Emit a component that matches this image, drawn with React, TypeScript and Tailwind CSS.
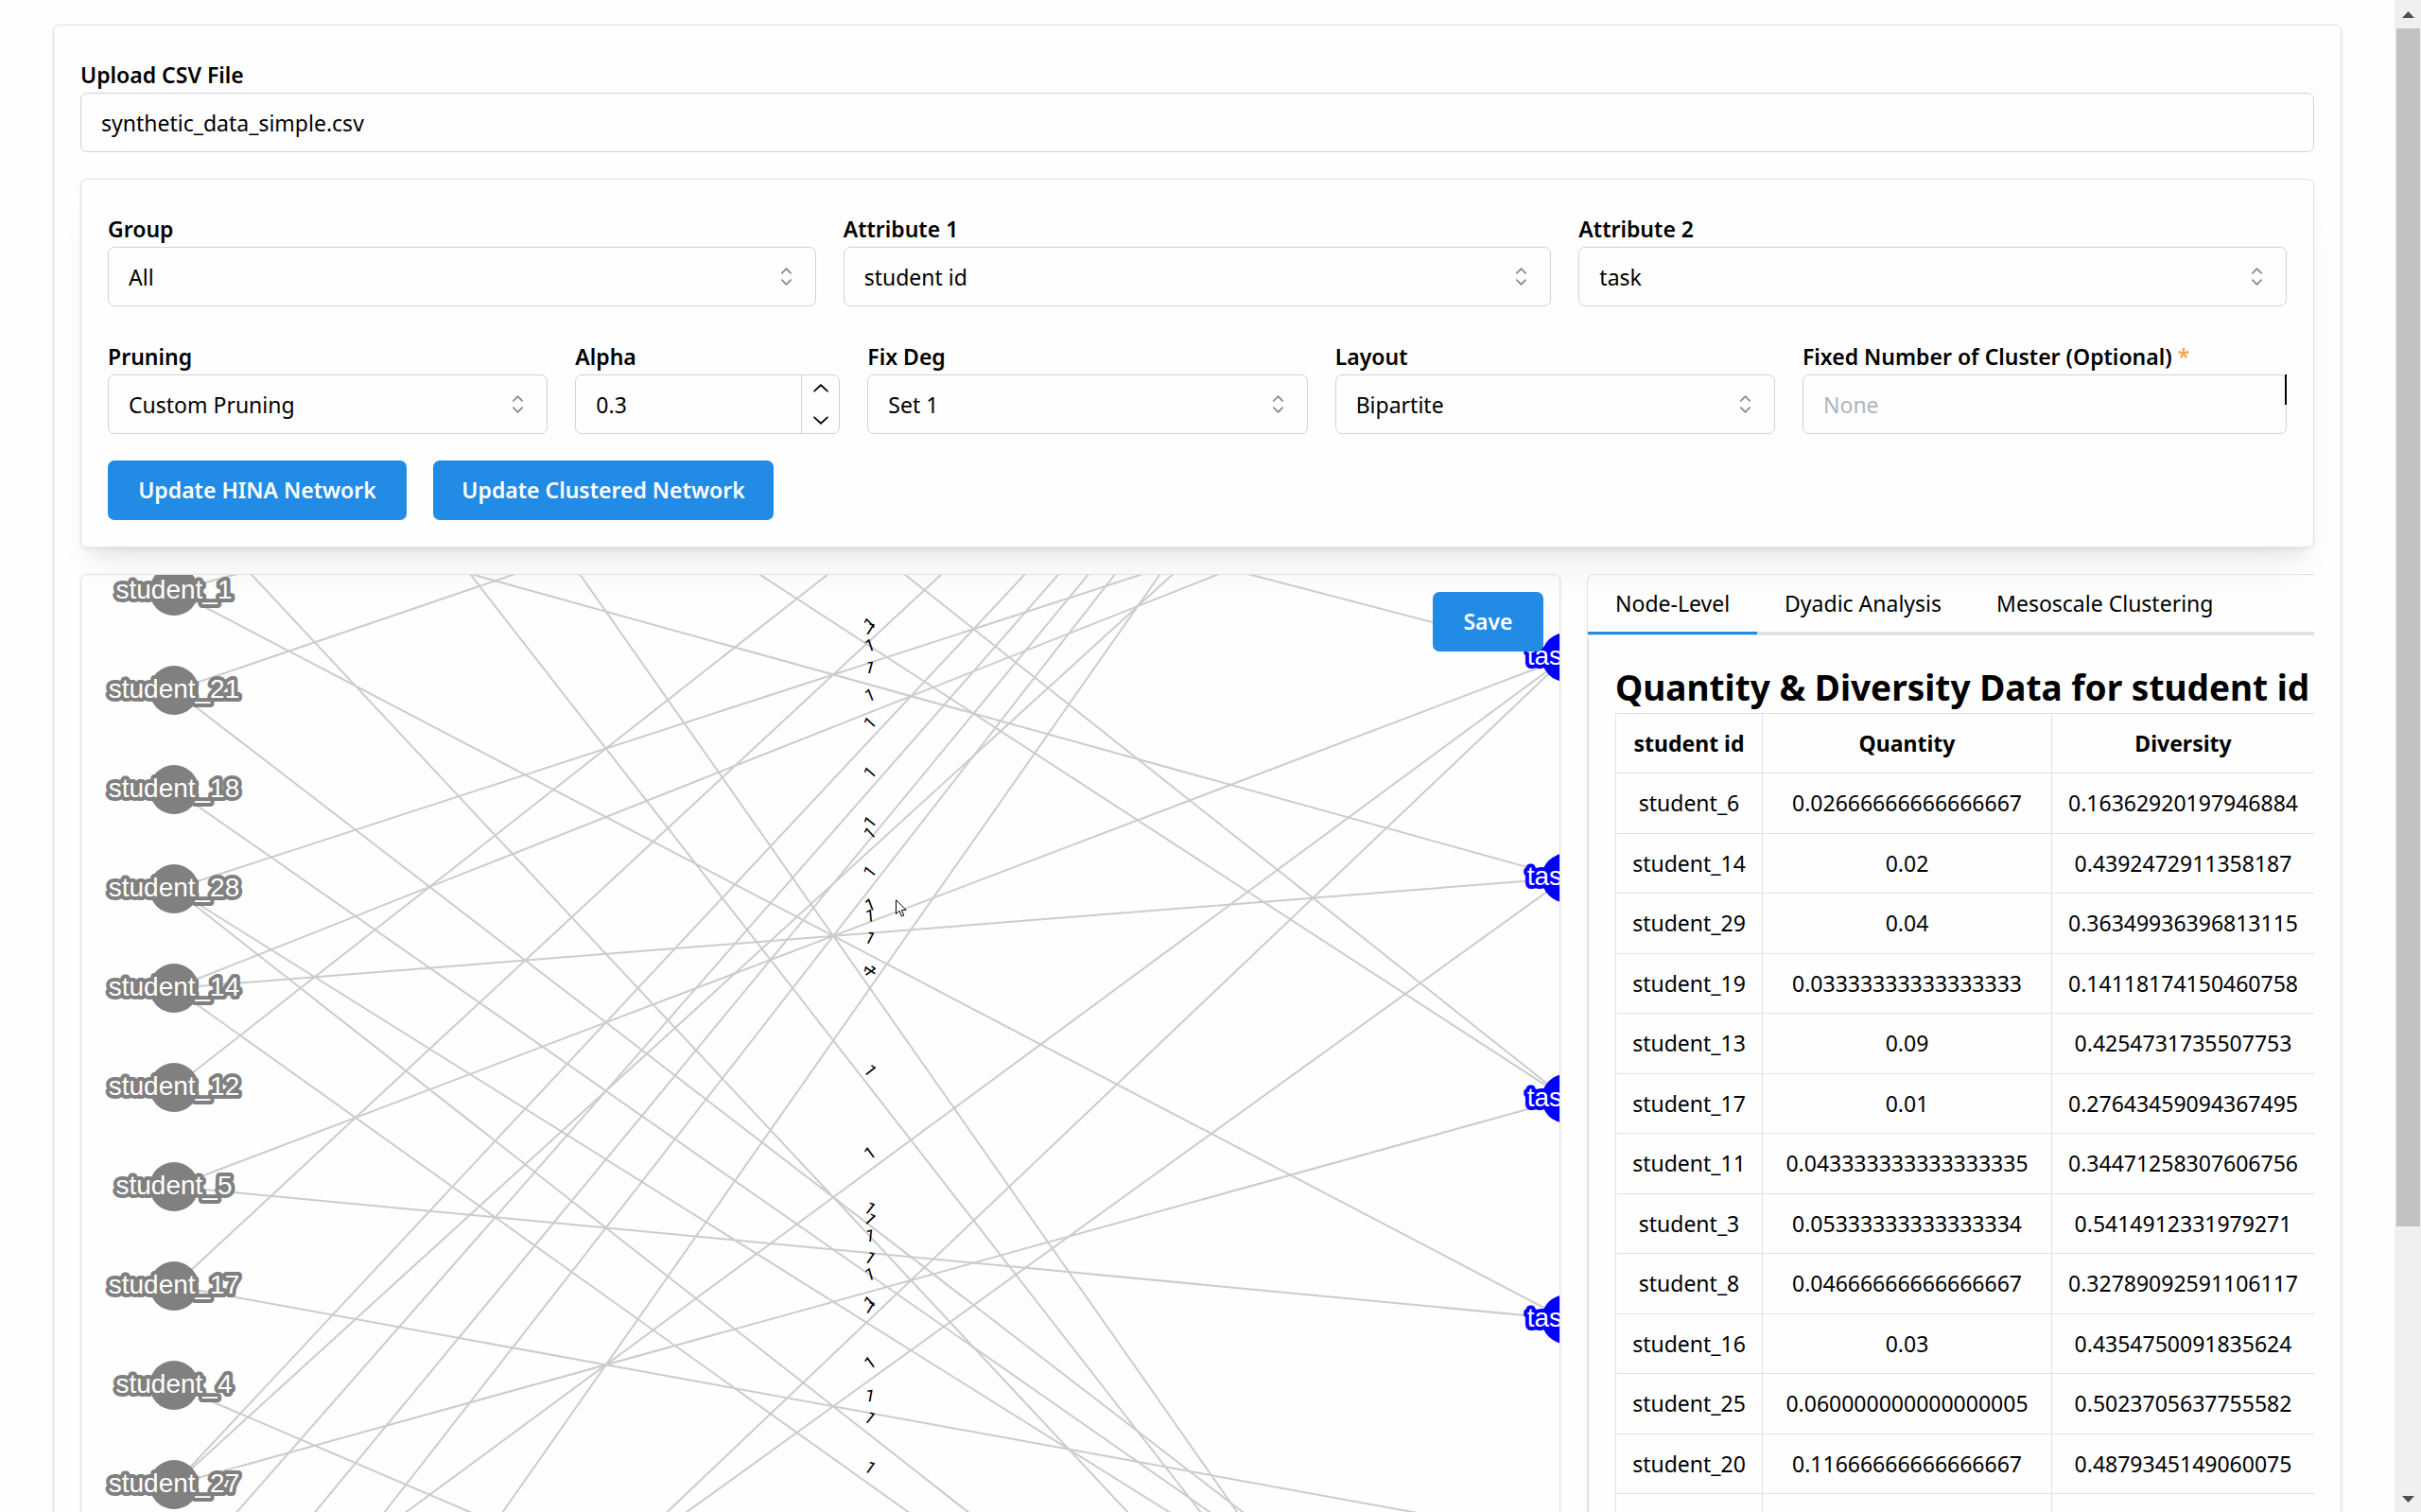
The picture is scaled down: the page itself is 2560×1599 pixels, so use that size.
import type { ReactNode } from 'react';

const TOP = 608;
const LEFT = 86;
const STUDENT_X = 184 - LEFT;
const TASK_X = 1656 - LEFT;
const CANVAS_BOTTOM = 980;

const students = [
  'student_1',
  'student_21',
  'student_18',
  'student_28',
  'student_14',
  'student_12',
  'student_5',
  'student_17',
  'student_4',
  'student_27',
];
const tasks = ['task_3', 'task_1', 'task_4', 'task_2'];

// [student row, task row]; negative rows are scrolled out above the canvas
const edges = [
  [0, -2], [0, 3], [1, -2], [1, 5], [2, 5], [3, -1], [3, 6], [3, 5],
  [4, -1], [4, 1], [4, 6], [5, -3], [6, 0], [6, 3], [7, -3], [7, 4],
  [8, 6], [9, 2], [9, -3], [9, -2], [10, -3], [11, -3], [12, -3], [14, -3],
  [11, 0], [14, 0], [13, 1], [-1, 6], [-1, 1], [-4, 6], [-4, 2], [-6, 6],
  [-6, 2], [-3, 0],
];

const studentY = (row: number) => 625 - TOP + row * 105;
const taskY = (row: number) => 695 - TOP + row * 233.4;

const edgeLabels = edges
  .map(([s, t]) => ({
    key: `${s}:${t}`,
    x: (STUDENT_X + TASK_X) / 2,
    y: (studentY(s) + taskY(t)) / 2 - 18,
    angle: (Math.atan2(taskY(t) - studentY(s), TASK_X - STUDENT_X) * 180) / Math.PI,
  }))
  .filter(({ y }) => y > 0 && y < CANVAS_BOTTOM);

const rows = [
  ['student_6', '0.02666666666666667', '0.16362920197946884'],
  ['student_14', '0.02', '0.4392472911358187'],
  ['student_29', '0.04', '0.36349936396813115'],
  ['student_19', '0.03333333333333333', '0.14118174150460758'],
  ['student_13', '0.09', '0.4254731735507753'],
  ['student_17', '0.01', '0.27643459094367495'],
  ['student_11', '0.043333333333333335', '0.34471258307606756'],
  ['student_3', '0.05333333333333334', '0.5414912331979271'],
  ['student_8', '0.04666666666666667', '0.32789092591106117'],
  ['student_16', '0.03', '0.4354750091835624'],
  ['student_25', '0.060000000000000005', '0.5023705637755582'],
  ['student_20', '0.11666666666666667', '0.4879345149060075'],
  ['', '', ''],
];

function Selector() {
  return (
    <svg
      viewBox="0 0 15 15"
      className="pointer-events-none absolute right-4 top-4 size-[31px] text-[#868e96]"
      fill="currentColor"
    >
      <path d="M4.93179 5.43179C4.75605 5.60753 4.75605 5.89245 4.93179 6.06819C5.10753 6.24392 5.39245 6.24392 5.56819 6.06819L7.49999 4.13638L9.43179 6.06819C9.60753 6.24392 9.89245 6.24392 10.0682 6.06819C10.2439 5.89245 10.2439 5.60753 10.0682 5.43179L7.81819 3.18179C7.73379 3.0974 7.61933 3.04999 7.49999 3.04999C7.38064 3.04999 7.26618 3.0974 7.18179 3.18179L4.93179 5.43179ZM10.0682 9.56819C10.2439 9.39245 10.2439 9.10753 10.0682 8.93179C9.89245 8.75606 9.60753 8.75606 9.43179 8.93179L7.49999 10.8636L5.56819 8.93179C5.39245 8.75606 5.10753 8.75606 4.93179 8.93179C4.75605 9.10753 4.75605 9.39245 4.93179 9.56819L7.18179 11.8182C7.35753 11.9939 7.64245 11.9939 7.81819 11.8182L10.0682 9.56819Z" />
    </svg>
  );
}

function Chevron({ up }: { up?: boolean }) {
  return (
    <svg viewBox="0 0 15 15" className={up ? 'size-[26px] rotate-180' : 'size-[26px]'} fill="currentColor">
      <path d="M3.13523 6.15803C3.3241 5.95657 3.64052 5.94637 3.84197 6.13523L7.5 9.56464L11.158 6.13523C11.3595 5.94637 11.6759 5.95657 11.8648 6.15803C12.0536 6.35949 12.0434 6.67591 11.842 6.86477L7.84197 10.6148C7.64964 10.7951 7.35036 10.7951 7.15803 10.6148L3.15803 6.86477C2.95657 6.67591 2.94637 6.35949 3.13523 6.15803Z" />
    </svg>
  );
}

interface FieldProps {
  id: string;
  label: ReactNode;
  className?: string;
  children: ReactNode;
}

function Field({ id, label, className = 'flex-1', children }: FieldProps) {
  return (
    <div className={className}>
      <label htmlFor={id} className="block h-[38px] font-semibold leading-[38px] whitespace-nowrap">
        {label}
      </label>
      <div className="relative h-[63px]">{children}</div>
    </div>
  );
}

const inputStyle =
  'block size-full appearance-none rounded-[7px] border border-[#ced4da] bg-[#fefefe] px-[21px] outline-none placeholder:text-[#adb5bd]';

function SelectField({ id, label, value }: { id: string; label: string; value: string }) {
  return (
    <Field id={id} label={label}>
      <select id={id} className={`${inputStyle} pt-[2px]`} defaultValue={value}>
        <option>{value}</option>
      </select>
      <Selector />
    </Field>
  );
}

const buttonStyle = 'h-[63px] rounded-[7px] bg-[#228be6] font-semibold text-white';

function Network() {
  return (
    <svg className="block size-full" fontFamily='"Liberation Sans", Arial, sans-serif'>
      {edges.map(([s, t]) => (
        <line
          key={`${s}:${t}`}
          x1={STUDENT_X}
          y1={studentY(s)}
          x2={TASK_X}
          y2={taskY(t)}
          stroke="#ccc"
          strokeWidth="2"
        />
      ))}
      <g fontFamily="Roboto, sans-serif" fontSize="18" textAnchor="middle" fill="#000">
        {edgeLabels.map(({ key, x, y, angle }) => (
          <text key={key} x={x} y={y + 6} transform={`rotate(${angle} ${x} ${y})`}>
            1
          </text>
        ))}
      </g>
      <g fontSize="28" textAnchor="middle" fill="#fff" strokeWidth="8" strokeLinejoin="round" paintOrder="stroke">
        {students.map((name, i) => (
          <g key={name}>
            <circle cx={STUDENT_X} cy={studentY(i)} r="26" fill="#808080" />
            <text x={STUDENT_X} y={studentY(i) + 8} stroke="#808080">
              {name}
            </text>
          </g>
        ))}
        {tasks.map((name, i) => (
          <g key={name}>
            <circle cx={TASK_X} cy={taskY(i)} r="26" fill="#00f" />
            <text x={TASK_X} y={taskY(i) + 8} stroke="#00f">
              {name}
            </text>
          </g>
        ))}
      </g>
    </svg>
  );
}

export default function App() {
  return (
    <div className="flex h-screen overflow-hidden bg-[#fefefe] font-['Noto_Sans','Segoe_UI',sans-serif] text-[23px] text-black">
      <main className="min-w-0 flex-1 px-14 pt-[26px]">
        <div className="rounded-[7px] border border-[#dee2e6] px-7 pt-[33px] pb-7 shadow-sm">
          <Field id="csv" label="Upload CSV File" className="w-full">
            <input id="csv" readOnly value="synthetic_data_simple.csv" className={inputStyle} />
          </Field>

          <section className="mt-7 rounded-[7px] border border-[#dee2e6] px-7 pt-[33px] pb-7 shadow-[0_2px_5px_rgba(0,0,0,0.05),0_35px_40px_-12px_rgba(0,0,0,0.05),0_16px_16px_-9px_rgba(0,0,0,0.06)]">
            <div className="flex gap-[29px]">
              <SelectField id="group" label="Group" value="All" />
              <SelectField id="attribute1" label="Attribute 1" value="student id" />
              <SelectField id="attribute2" label="Attribute 2" value="task" />
            </div>
            <div className="mt-[34px] flex gap-[29px]">
              <SelectField id="pruning" label="Pruning" value="Custom Pruning" />
              <Field id="alpha" label="Alpha" className="w-[280px]">
                <input id="alpha" defaultValue="0.3" className={inputStyle} />
                <div className="absolute inset-y-px right-px flex w-10 flex-col border-l border-[#ced4da]">
                  <button aria-label="Increase" className="flex flex-1 items-center justify-center">
                    <Chevron up />
                  </button>
                  <button aria-label="Decrease" className="flex flex-1 items-center justify-center">
                    <Chevron />
                  </button>
                </div>
              </Field>
              <SelectField id="fixdeg" label="Fix Deg" value="Set 1" />
              <SelectField id="layout" label="Layout" value="Bipartite" />
              <Field
                id="clusters"
                label={
                  <>
                    Fixed Number of Cluster (Optional) <span className="text-[#f5a34b]">*</span>
                  </>
                }
                className="w-[512px]"
              >
                <input id="clusters" placeholder="None" className={inputStyle} />
                <div className="absolute right-0 top-0 h-8 w-[2px] bg-black" />
              </Field>
            </div>
            <div className="mt-7 flex gap-7">
              <button className={`${buttonStyle} w-[316px]`}>Update HINA Network</button>
              <button className={`${buttonStyle} w-[360px]`}>Update Clustered Network</button>
            </div>
          </section>

          <div className="mt-7 flex gap-7">
            <section className="relative h-[1050px] min-w-0 flex-1 overflow-hidden rounded-[7px] border border-[#dee2e6] shadow-sm">
              <Network />
              <button className={`${buttonStyle} absolute right-[17px] top-[18px] w-[117px]`}>Save</button>
              <svg
                viewBox="0 0 12 19"
                className="absolute left-[861px] top-[343px] h-[19px] w-3"
                fill="#fff"
                stroke="#000"
              >
                <path d="M.5 .8V15.5L4 12.2L6.4 18L8.8 17L6.4 11.4H11.2Z" />
              </svg>
            </section>

            <section className="h-[1050px] w-[769px] overflow-hidden rounded-tl-[7px] border-l border-t border-[#dee2e6]">
              <div role="tablist" className="flex h-16 border-b-4 border-[#dee2e6]">
                <button role="tab" aria-selected="true" className="h-[63px] border-b-[3px] border-[#228be6] px-[29px]">
                  Node-Level
                </button>
                <button role="tab" aria-selected="false" className="h-[60px] px-[29px]">
                  Dyadic Analysis
                </button>
                <button role="tab" aria-selected="false" className="h-[60px] px-[29px]">
                  Mesoscale Clustering
                </button>
              </div>
              <div className="rounded-tl-[7px] border-l border-[#dee2e6] pl-7 pt-7">
                <h2 className="h-[54px] text-[37px] font-bold leading-[54px] whitespace-nowrap">
                  Quantity &amp; Diversity Data for student id
                </h2>
                <table className="w-[740px] table-fixed border-collapse text-center [&_td]:border [&_td]:border-[#dee2e6] [&_th]:border [&_th]:border-[#dee2e6]">
                  <thead>
                    <tr className="h-[63px]">
                      <th className="w-[155px]">student id</th>
                      <th className="w-[306px]">Quantity</th>
                      <th>Diversity</th>
                    </tr>
                  </thead>
                  <tbody>
                    {rows.map(([id, quantity, diversity]) => (
                      <tr key={id} className="odd:h-16 even:h-[63px]">
                        <td>{id}</td>
                        <td>{quantity}</td>
                        <td>{diversity}</td>
                      </tr>
                    ))}
                  </tbody>
                </table>
              </div>
            </section>
          </div>
        </div>
      </main>

      <div className="flex w-7 flex-col items-center bg-[#f0f0f0]">
        <svg viewBox="0 0 28 30" className="h-[30px] w-7 shrink-0" fill="#505050">
          <path d="M8 19L14.5 12L21 19Z" />
        </svg>
        <div className="w-[25px] grow-[823] bg-[#c1c1c1]" />
        <div className="grow-[177]" />
        <svg viewBox="0 0 28 30" className="h-[30px] w-7 shrink-0" fill="#505050">
          <path d="M8 13L14.5 20L21 13Z" />
        </svg>
      </div>
    </div>
  );
}
